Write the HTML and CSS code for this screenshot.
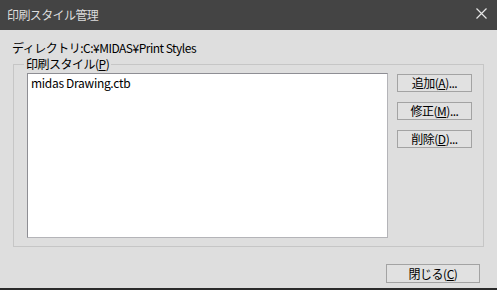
FILE: index.html
```html
<!DOCTYPE html>
<html lang="ja">
  <head>
    <meta charset="UTF-8" />
    <title>印刷スタイル管理</title>
    <link rel="stylesheet" href="styles.css">
  </head>
  <body>
    <div class="window">
      <div class="titlebar">
        <span class="title">印刷スタイル管理</span>
        <svg class="close-x" width="11" height="11" viewBox="0 0 11 11">
          <path d="M0.5 0.5 L10.5 10.5 M10.5 0.5 L0.5 10.5" stroke="#e6e6e6" stroke-width="1.2" fill="none" />
        </svg>
      </div>
      <div class="content">
        <div class="dir">ディレクトリ:C:¥MIDAS¥Print Styles</div>
        <div class="group">
          <span class="legend">印刷スタイル(<u>P</u>)</span>
          <div class="group-body">
            <div class="listbox">
              <div class="item">midas Drawing.ctb</div>
            </div>
            <div class="side">
              <button class="btn">追加(<u>A</u>)...</button>
              <button class="btn">修正(<u>M</u>)...</button>
              <button class="btn">削除(<u>D</u>)...</button>
            </div>
          </div>
        </div>
        <div class="footer">
          <button class="btn close-btn">閉じる(<u>C</u>)</button>
        </div>
      </div>
    </div>
  </body>
</html>
```

FILE: styles.css
```css
body {
  margin: 0;
  font-family: "Noto Sans CJK JP", "Liberation Sans", sans-serif;
  font-size: 12px;
  color: #000;
}

.window {
  width: 497px;
  height: 290px;
  background: #dedede;
  border-bottom: 2px solid #2b2b2b;
  box-sizing: border-box;
  display: flex;
  flex-direction: column;
}

.titlebar {
  height: 29px;
  background: #444444;
  display: flex;
  align-items: center;
  justify-content: space-between;
  padding: 0 10px 1px 7px;
}

.title {
  color: #dcdcdc;
  font-size: 12px;
  letter-spacing: -0.6px;
}

.close-x {
  margin-top: -2px;
}

.content {
  flex: 1;
  padding: 11px 0 0 12px;
}

.dir {
  line-height: 14px;
  height: 14px;
  letter-spacing: -0.5px;
}

.group {
  margin: 9px 0 0 1px;
  width: 471px;
  height: 183px;
  border: 1px solid #c6c6c6;
  box-sizing: border-box;
}

.legend {
  display: inline-block;
  margin: -8px 0 0 10px;
  padding: 0 2px;
  background: #dedede;
  line-height: 14px;
  letter-spacing: -0.5px;
  vertical-align: top;
}

.group-body {
  display: flex;
  margin: -9px 0 0 13px;
}

.listbox {
  width: 361px;
  height: 165px;
  background: #fff;
  border: 1px solid #8e8e94;
  border-right-color: #b4b4b8;
  border-bottom-color: #b4b4b8;
  box-sizing: border-box;
  padding: 2px 0 0 3px;
}

.item {
  line-height: 14px;
  letter-spacing: -0.3px;
}

.side {
  display: flex;
  flex-direction: column;
  gap: 10px;
  margin: 1px 0 0 9px;
}

.btn {
  width: 75px;
  height: 18px;
  padding: 0;
  background: #e1e1e1;
  border: 1px solid #a3a3a3;
  font-family: inherit;
  font-size: 12px;
  line-height: 14px;
  letter-spacing: -0.5px;
  color: #000;
}

.footer {
  display: flex;
  justify-content: flex-end;
  padding: 17px 17px 0 0;
}

.close-btn {
  width: 94px;
  height: 19px;
}
```
